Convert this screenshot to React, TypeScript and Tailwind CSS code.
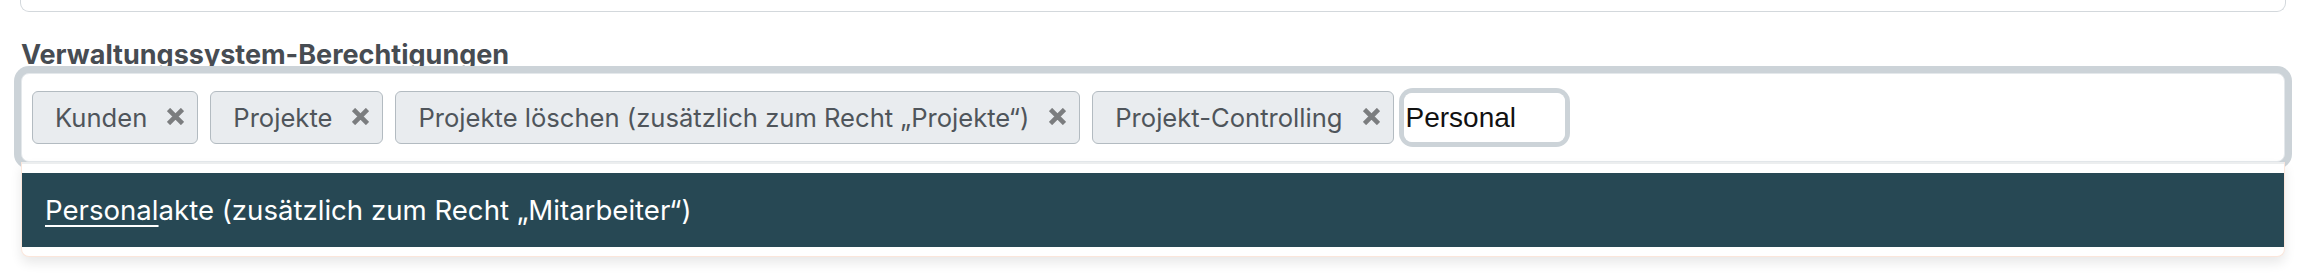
import React from 'react'

const tags = [
  'Kunden',
  'Projekte',
  'Projekte löschen (zusätzlich zum Recht „Projekte“)',
  'Projekt-Controlling',
]

function RemoveIcon() {
  return (
    <svg width="17" height="17" viewBox="0 0 17 17" className="shrink-0">
      <path d="M1.5 1.5 L15.5 15.5 M15.5 1.5 L1.5 15.5" stroke="#7b7d7f" strokeWidth="4.6" strokeLinecap="butt" />
    </svg>
  )
}

function Tag({ label }: { label: string }) {
  return (
    <div className="flex h-[53px] items-center rounded-[6px] border border-[#b3bbc1] bg-[#e9ecef] pl-[22px] pr-[13px] text-[25.6px] text-[#4f555b]">
      <span className="leading-none">{label}</span>
      <span className="ml-[20px] mt-[-3px] flex items-center">
        <RemoveIcon />
      </span>
    </div>
  )
}

export default function App() {
  return (
    <div className="min-h-[276px] bg-white font-['Inter',sans-serif]">
      {/* previous field, cut off at the top */}
      <div className="ml-[20px] mr-[20px] h-[12px] rounded-b-[9px] border-x border-b border-[#d3d8dc]" />

      <div className="mx-[21px] mt-[27px]">
        <label className="block text-[27px] font-bold leading-[1.2] text-[#474c52]">
          Verwaltungssystem-Berechtigungen
        </label>

        <div className="relative mt-[2px]">
          <div className="flex h-[89px] items-center gap-[12px] rounded-[8px] border border-[#e4e8eb] bg-white pl-[10px] shadow-[0_0_0_7px_#ccd3d8]">
            {tags.map((t) => (
              <Tag key={t} label={t} />
            ))}
            <div className="ml-[-2px] rounded-[9px] shadow-[0_0_0_5px_#ccd3d8]">
              <input
                readOnly
                value="Personal"
                className="block h-[49px] w-[161px] rounded-[8px] border-0 bg-white px-[2px] font-['Liberation_Sans',Arial,sans-serif] text-[28px] text-[#111] outline-none"
              />
            </div>
          </div>

          <div className="absolute left-0 right-0 top-full z-10 rounded-b-[8px] border border-t-0 border-[#fbe6db] bg-white shadow-[0_6px_12px_rgba(0,0,0,0.09)]">
            <div className="border-t-2 border-[#eceeef] pt-[9px] pb-[9px]">
              <div className="flex h-[74px] items-center bg-[#274854] pl-[23px] text-[27.6px] text-white">
                <span>
                  <span className="underline decoration-[2px] underline-offset-[5px]">Personal</span>
                  akte (zusätzlich zum Recht „Mitarbeiter“)
                </span>
              </div>
            </div>
          </div>
        </div>
      </div>
    </div>
  )
}
